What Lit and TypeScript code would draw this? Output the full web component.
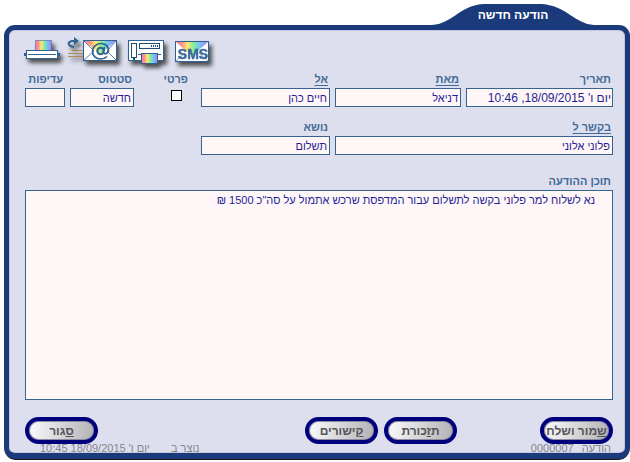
import { LitElement, html, css, svg } from "lit";
import { customElement } from "lit/decorators.js";

const rainbow = (id: string) => svg`
  <linearGradient id=${id} x1="0" x2="1" y1="0" y2="0">
    <stop offset="0" stop-color="#f07ac8" />
    <stop offset=".18" stop-color="#ff9080" />
    <stop offset=".36" stop-color="#ffe870" />
    <stop offset=".55" stop-color="#84f09a" />
    <stop offset=".75" stop-color="#74c0fa" />
    <stop offset="1" stop-color="#b07cf0" />
  </linearGradient>`;

const printerIcon = html`
  <svg width="42" height="30" viewBox="0 0 42 30" aria-hidden="true">
    <defs>${rainbow("rp")}</defs>
    <rect x="13.5" y="3.5" width="16" height="11" fill="url(#rp)" stroke="#3a6a9a" stroke-opacity=".6" />
    <path d="M2 16h36v3H2z" fill="#2f628f" />
    <rect x="4.5" y="13.5" width="31" height="8" fill="#fff" stroke="#2f628f" />
    <path d="M6 17.5h28" stroke="#2f628f" />
  </svg>`;

const mailIcon = html`
  <svg width="58" height="30" viewBox="0 0 58 30" aria-hidden="true">
    <defs>${rainbow("rm")}</defs>
    <path d="M6 13.5h12M2 16.5h16M2 19.5h16" stroke="#ad8a50" />
    <path d="M8 10C1 9 1 4 7 4h3" fill="none" stroke="#2f628f" stroke-width="2" />
    <path d="M8 0l5 4-5 4z" fill="#2f628f" />
    <rect x="17.5" y="3.5" width="33" height="20" fill="#fff" stroke="#2f628f" />
    <path d="M18 4h32L34 17z" fill="url(#rm)" />
    <path d="M18 4l10 10L18 23M50 4L41 14l9 9" fill="none" stroke="#2f628f" stroke-width=".8" />
    <circle cx="34.5" cy="14" r="3.2" fill="none" stroke="#2f628f" stroke-width="2" />
    <path d="M38.5 10l-1 5c0 3 5 2 5-2 0-4-3.500-6.500-7.500-6.500-5 0-8.500 3.500-8.500 8s3.500 7.500 8 7.500c3 0 5-1 6.500-2.500" fill="none" stroke="#2f628f" stroke-width="1.7" />
  </svg>`;

const faxIcon = html`
  <svg width="45" height="30" viewBox="0 0 45 30" aria-hidden="true">
    <defs>${rainbow("rf")}</defs>
    <rect x="2.5" y="3.5" width="35" height="20" fill="#fff" stroke="#2f628f" />
    <rect x="5.5" y="6.5" width="5" height="14" fill="#fff" stroke="#24506f" />
    <path d="M8 21v2" stroke="#24506f" stroke-width="2" />
    <rect x="13.5" y="6.5" width="20" height="5" fill="#fff" stroke="#24506f" />
    <path d="M25 9h7" stroke="#24506f" stroke-width="2" stroke-dasharray="1 1" />
    <path d="M12 17.5h23" stroke="#2f628f" />
    <rect x="15.5" y="16.5" width="16" height="10" fill="url(#rf)" stroke="#2f628f" />
  </svg>`;

const smsIcon = html`
  <svg width="44" height="30" viewBox="0 0 44 30" aria-hidden="true">
    <defs>${rainbow("rs")}</defs>
    <rect x="2.5" y="4.5" width="33" height="20" fill="#fff" stroke="#2f628f" />
    <path d="M3 5h32L19 19z" fill="url(#rs)" />
    <path d="M3 24l9-8M35 24l-9-8" stroke="#8aa6c2" />
    <text x="20" y="22" text-anchor="middle" class="sms">SMS</text>
  </svg>`;

@customElement("app-root")
export class AppRoot extends LitElement {
  static styles = css`
    :host {
      display: flex;
      flex-direction: column;
      box-sizing: border-box;
      min-height: 100vh;
      padding: 4px 0 3px 4px;
      background: #fff;
      direction: rtl;
      font: 11px/14px "Liberation Sans", Arial, sans-serif;
      color: #1e1e96;
    }
    .tab {
      position: relative;
      width: 162px;
      height: 21px;
      margin-right: 36px;
      color: #fff;
    }
    .tab svg { position: absolute; inset: 0; }
    .title {
      position: relative;
      margin: 0;
      padding-top: 4px;
      text-align: center;
      font: bold 12px/14px "Liberation Sans", Arial, sans-serif;
    }
    .panel {
      flex: 1;
      display: flex;
      flex-direction: column;
      margin: 0;
      padding: 7px 12px 0 16px;
      border: 5px solid #1b3a7c;
      border-bottom-width: 6px;
      border-radius: 11px;
      background: #dedfee;
      box-shadow: inset 0 0 0 1px #c3c7df, 0 2px 0 -1px #20160e;
    }
    .toolbar {
      direction: ltr;
      display: flex;
      gap: 2px;
      margin: 0 -3px;
    }
    .tool {
      display: block;
      padding: 0;
      border: 0;
      background: none;
      height: 30px;
    }
    .tool svg {
      display: block;
      overflow: visible;
      filter: drop-shadow(3px 4px 2px rgb(0 0 0 / 65%));
    }
    .sms {
      font: bold 14px "Liberation Sans", Arial, sans-serif;
      fill: #3a6a9c;
      stroke: #3a6a9c;
      stroke-width: 0.5px;
    }
    .fields {
      display: grid;
      grid-template-columns: 147fr 126fr 129fr 57fr 64fr 40fr;
      gap: 13px 5px;
      margin-top: 5px;
    }
    .field {
      display: flex;
      flex-direction: column;
      gap: 2px;
      min-width: 0;
    }
    .wide { grid-column: span 2; }
    .private { align-items: flex-start; padding-right: 6px; }
    .body { flex: 1; margin-top: 19px; }
    label {
      padding-right: 2px;
      font-weight: bold;
      color: #426b97;
      white-space: nowrap;
    }
    .underlined { text-decoration: underline; text-underline-offset: 2px; }
    input, textarea {
      box-sizing: border-box;
      margin: 0;
      border: 1px solid #36648f;
      border-radius: 0;
      background: #fff6f7;
      color: inherit;
      font: inherit;
      outline: none;
    }
    .text {
      width: 100%;
      height: 19px;
      padding: 0 2px;
    }
    #date { font-size: 12px; padding: 0 1px; }
    .check {
      appearance: none;
      width: 11px;
      height: 11px;
      margin: 2px 8px 0 0;
      border: 1px solid #000;
      background: #fff;
    }
    .check:checked { background: #36648f; }
    textarea {
      flex: 1;
      min-height: 120px;
      padding: 2px 17px;
      resize: none;
    }
    .actions {
      display: grid;
      grid-template-columns: 73px 83fr 73px 6px 73px 207fr 73px;
      margin-top: 17px;
    }
    .action {
      height: 27px;
      padding: 0;
      border: 4px solid #00007c;
      border-radius: 14px;
      background: linear-gradient(100deg, #f4f4f6 10%, #d6d6d8 50%, #b2b2b4);
      box-shadow: inset 0 0 0 1px #8a8aa0;
      font: bold 12px/14px "Liberation Sans", Arial, sans-serif;
      color: #55555a;
      white-space: nowrap;
    }
    .reminder { grid-column: 3; }
    .links { grid-column: 5; }
    .close { grid-column: 7; }
    .status {
      display: flex;
      justify-content: space-between;
      padding: 0 2px 0 15px;
      line-height: 9px;
      color: #85858c;
    }
    .group { display: flex; gap: 8px; }
    .created { gap: 21px; }
  `;

  render() {
    return html`
      <header class="tab">
        <svg width="162" height="21" viewBox="0 0 162 21" aria-hidden="true">
          <path d="M0 21C20 20 27 2 51 0h59c25 2 33 20 52 21z" fill="#1b3a7c" />
        </svg>
        <h1 class="title">הודעה חדשה</h1>
      </header>
      <form class="panel" @submit=${(e: Event) => e.preventDefault()}>
        <div class="toolbar">
          <button class="tool" type="button" aria-label="הדפסה">${printerIcon}</button>
          <button class="tool" type="button" aria-label="דואר אלקטרוני">${mailIcon}</button>
          <button class="tool" type="button" aria-label="פקס">${faxIcon}</button>
          <button class="tool" type="button" aria-label="SMS">${smsIcon}</button>
        </div>
        <div class="fields">
          ${this.field("date", "תאריך", "יום ו' 18/09/2015, 10:46")}
          ${this.field("from", "מאת", "דניאל", true)}
          ${this.field("to", "אל", "חיים כהן", true)}
          <div class="field private">
            <label for="private">פרטי</label>
            <input class="check" id="private" type="checkbox" />
          </div>
          ${this.field("state", "סטטוס", "חדשה")}
          ${this.field("priority", "עדיפות", "")}
          ${this.field("regarding", "בקשר ל", "פלוני אלוני", true, true)}
          ${this.field("subject", "נושא", "תשלום")}
        </div>
        <div class="field body">
          <label for="content">תוכן ההודעה</label>
          <textarea id="content" .value=${'נא לשלוח למר פלוני בקשה לתשלום עבור המדפסת שרכש אתמול על סה"כ 1500 ₪'}></textarea>
        </div>
        <div class="actions">
          <button class="action" type="submit"><u>ש</u>מור ושלח</button>
          <button class="action reminder" type="button">ת<u>ז</u>כורת</button>
          <button class="action links" type="button"><u>ק</u>ישורים</button>
          <button class="action close" type="button"><u>ס</u>גור</button>
        </div>
        <div class="status">
          <div class="group"><span>הודעה</span><span>0000007</span></div>
          <div class="group created"><span>נוצר ב</span><span>יום ו' 18/09/2015 10:45</span></div>
        </div>
      </form>
    `;
  }

  private field(id: string, label: string, value: string, underlined = false, wide = false) {
    return html`
      <div class="field ${wide ? "wide" : ""}">
        <label for=${id}><span class=${underlined ? "underlined" : ""}>${label}</span></label>
        <input class="text" id=${id} type="text" .value=${value} />
      </div>
    `;
  }
}
